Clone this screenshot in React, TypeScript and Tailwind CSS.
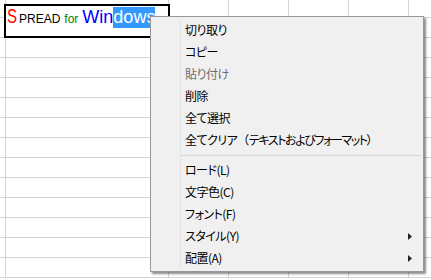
import React from "react";

const cols = ["w-[6px]", "w-[163px]", "w-[60px]", "w-[60px]", "w-[60px]", "w-[60px]", "w-[60px]"];

type Item = { label: React.ReactNode; disabled?: boolean; sub?: boolean; sep?: boolean };

const items: Item[] = [
  { label: "切り取り" },
  { label: "コピー" },
  { label: "貼り付け", disabled: true },
  { label: "削除" },
  { label: "全て選択" },
  {
    label: (
      <>
        全てクリア<span className="[font-feature-settings:normal]">（</span>
        <span className="tracking-[-1.4px]">テキストおよびフォーマット</span>）
      </>
    ),
  },
  { label: "", sep: true },
  { label: "ロード(L)" },
  { label: "文字色(C)" },
  { label: "フォント(F)" },
  { label: "スタイル(Y)", sub: true },
  { label: "配置(A)", sub: true },
];

const Arrow = () => (
  <svg width="4" height="7" viewBox="0 0 4 7" className="mr-[11px]">
    <path d="M0 0 L4 3.5 L0 7 Z" fill="#222" />
  </svg>
);

export default function App() {
  return (
    <div className="relative w-[431px] h-[280px] overflow-hidden bg-white font-['Liberation_Sans',sans-serif]">
      {/* sheet grid */}
      <div className="flex flex-col">
        {Array.from({ length: 14 }).map((_, r) => (
          <div
            key={r}
            className={`flex border-b border-[#d4d4d4] ${r === 0 ? "h-[18px]" : "h-[20px]"}`}
          >
            {cols.map((c, i) => (
              <div key={i} className={`${c} shrink-0 border-r border-[#d4d4d4]`} />
            ))}
            <div className="flex-1" />
          </div>
        ))}
      </div>

      {/* cell editor */}
      <div className="absolute left-[4px] top-[4px] w-[166px] h-[34px] border-2 border-black bg-white overflow-hidden">
        <div className="flex items-baseline pl-[1px] leading-[21px] whitespace-nowrap">
          <span className="text-[20px] text-[#ff0000] inline-block scale-x-75 origin-left w-[11px]">S</span>
          <span className="text-[12px] text-black ml-[1px]">PREAD</span>
          <span className="text-[12px] text-[#008000] ml-[4px]">for</span>
          <span className="text-[18px] text-[#0000ff] ml-[4px]">Win</span>
          <span className="text-[18px] text-white bg-[#3399ff]">dows</span>
        </div>
      </div>

      {/* context menu */}
      <div className="absolute left-[150px] top-[16px] w-[274px] border border-[#979797] bg-[#f0f0f0] py-[2px] shadow-[2px_2px_2px_rgba(0,0,0,0.45)] font-['Noto_Sans_CJK_JP',sans-serif] text-[12px] tracking-[-0.5px] [font-feature-settings:'palt']">
        <div className="absolute left-[29px] top-[2px] bottom-[2px] w-px bg-[#e2e2e2]" />
        {items.map((it, i) =>
          it.sep ? (
            <div key={i} className="h-[8px] flex items-center pl-[30px] pr-[2px]">
              <div className="h-px w-full bg-[#d7d7d7]" />
            </div>
          ) : (
            <div
              key={i}
              className={`relative h-[22px] flex items-center justify-between pl-[34px] ${
                it.disabled ? "text-[#6d6d6d]" : "text-black"
              }`}
            >
              <span className="leading-none">{it.label}</span>
              {it.sub && <Arrow />}
            </div>
          )
        )}
      </div>
    </div>
  );
}
